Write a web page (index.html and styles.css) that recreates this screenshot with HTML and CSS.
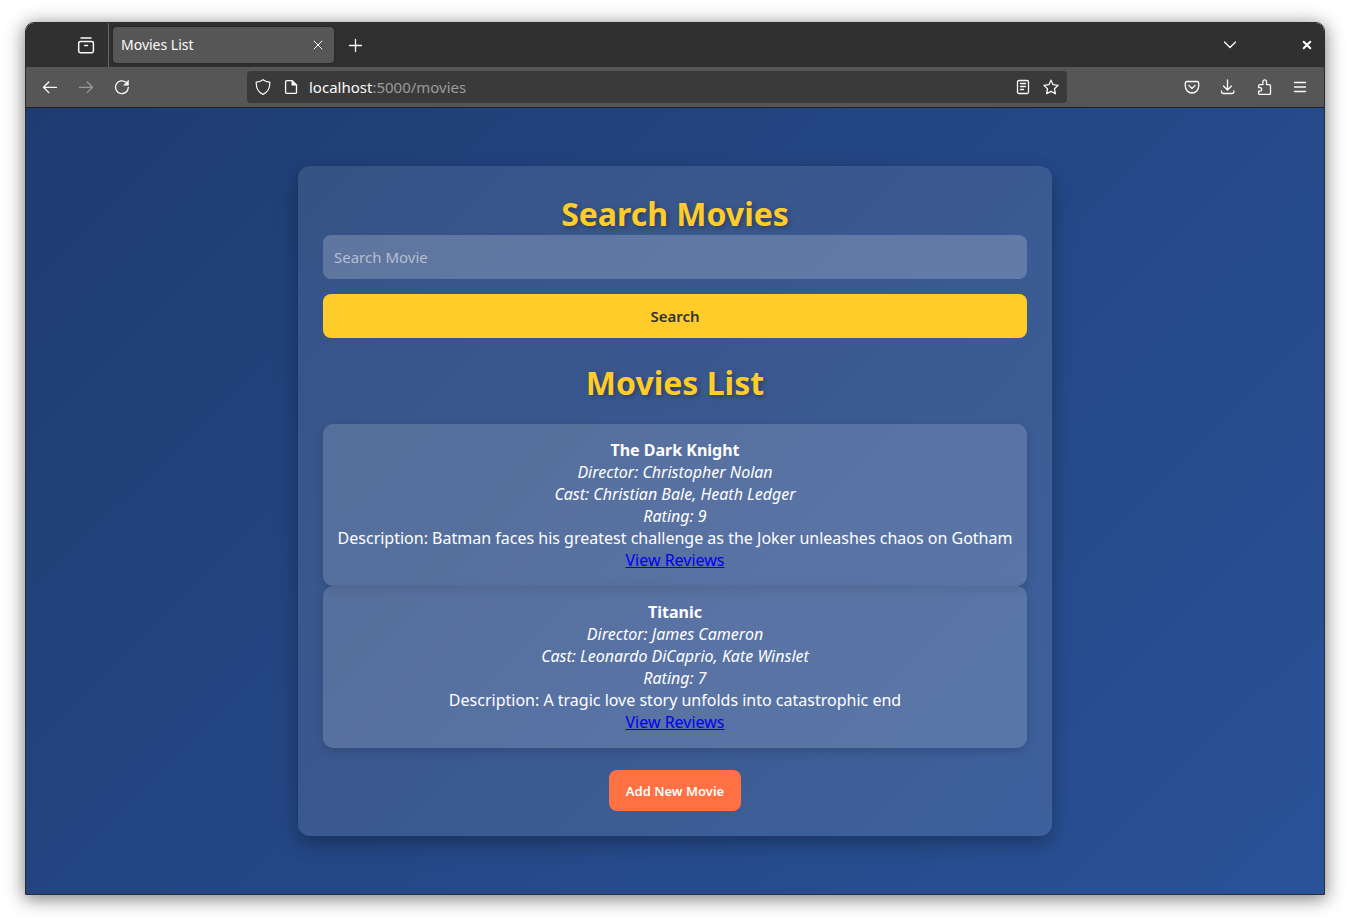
FILE: index.html
```html
<!DOCTYPE html>
<html lang="en">
<head>
<meta charset="utf-8">
<meta name="viewport" content="width=device-width, initial-scale=1">
<title>Movies List</title>
<link rel="stylesheet" href="styles.css">
</head>
<body>
<div class="window">
  <header class="tabbar">
    <button class="tool recent" aria-label="Recent browsing">
      <svg class="icon-lg" viewBox="0 0 20 20"><path d="M5 3h10M2.700 8c0-1 .6-1.600 1.600-1.600h11.500c1 0 1.600.6 1.600 1.600v8.100c0 1-.6 1.600-1.600 1.600H4.300c-1 0-1.600-.6-1.600-1.600zM8.700 10.500h2.800"/></svg>
    </button>
    <div class="tab">
      <span class="tab-title">Movies List</span>
      <button class="tab-close" aria-label="Close tab"><svg class="icon" viewBox="0 0 16 16"><path class="thin" d="M4 4l8 8M12 4l-8 8"/></svg></button>
    </div>
    <button class="tool new-tab" aria-label="New tab"><svg class="icon" viewBox="0 0 16 16"><path d="M8.500 2.500v12M2.500 8.500h12"/></svg></button>
    <button class="tool all-tabs" aria-label="List all tabs"><svg class="icon" viewBox="0 0 16 16"><path d="M2.500 5L8 10.500 13.500 5"/></svg></button>
    <button class="tool close-window" aria-label="Close window"><svg class="icon" viewBox="0 0 16 16"><path class="heavy" d="M4.700 4.700l6.600 6.600M11.300 4.700l-6.600 6.600"/></svg></button>
  </header>
  <nav class="toolbar">
    <div class="tools">
      <button class="tool" aria-label="Back"><svg class="icon" viewBox="0 0 16 16"><path d="M14.500 8.300H1.800M6.800 3L1.500 8.300l5.300 5.300"/></svg></button>
      <button class="tool" aria-label="Forward" disabled><svg class="icon" viewBox="0 0 16 16"><path d="M1.500 8.300h12.700M9.200 3l5.300 5.300-5.300 5.300"/></svg></button>
      <button class="tool" aria-label="Reload"><svg class="icon" viewBox="0 0 16 16"><path d="M14.300 8.500A6.400 6.400 0 1 1 12 3.300"/><path class="solid" d="M14.500 1.300v5H9.800z"/></svg></button>
    </div>
    <div class="address">
      <svg class="icon" viewBox="0 0 16 16"><path class="mid" d="M8 .7c2 1.500 4.300 2.300 6.800 2.500.2 5.600-1.600 9.700-6.800 12.200C2.800 12.900 1 8.800 1.200 3.200 3.700 3 6 2.200 8 .7z"/></svg>
      <svg class="icon" viewBox="0 0 16 16"><path d="M3.800 1.600h5.400l4.300 4.300v7.300c0 .8-.4 1.200-1.200 1.200H3.800c-.8 0-1.200-.4-1.200-1.200V2.800c0-.8.4-1.200 1.200-1.200z"/><path class="solid" d="M8.800 1.600v4.700h4.700z"/></svg>
      <a class="url" href="/movies"><span class="host">localhost</span>:5000/movies</a>
      <svg class="icon" viewBox="0 0 16 16"><rect x="2.500" y="1.500" width="11" height="13" rx="1.500"/><path d="M5.500 4.500h5M5.500 7.500h5M5.500 10.500h3"/></svg>
      <svg class="icon star" viewBox="0 0 16 16"><path d="M8 1.200l2.100 4.500 5 .7-3.600 3.400.9 5L8 12.400l-4.400 2.400.9-5L.9 6.400l5-.7z"/></svg>
    </div>
    <div class="tools">
      <button class="tool" aria-label="Save to Pocket"><svg class="icon" viewBox="0 0 16 16"><path d="M3 2.500h10c1 0 1.700.7 1.700 1.700v2.900C14.700 11 11.700 14 8 14S1.300 11 1.300 7.100V4.200c0-1 .7-1.700 1.700-1.700zM4.800 6.400L8 9.500l3.200-3.100"/></svg></button>
      <button class="tool" aria-label="Downloads"><svg class="icon" viewBox="0 0 16 16"><path d="M7.500 1v10M3.500 7l4 4 4-4M1.500 12v.8c0 1 .7 1.700 1.700 1.700h9c1 0 1.700-.7 1.700-1.700V12"/></svg></button>
      <button class="tool" aria-label="Extensions"><svg class="icon" viewBox="0 0 16 16"><path d="M2.600 8.600V6.900c0-.8.500-1.300 1.300-1.300h3V2.800c0-2.500 3.600-2.500 3.600 0v2.800h2.700c.8 0 1.300.5 1.300 1.300v7.300c0 .8-.5 1.300-1.300 1.300H3.900c-.8 0-1.300-.5-1.300-1.300v-2h1.300c2.500 0 2.500-3.600 0-3.600z"/></svg></button>
      <button class="tool" aria-label="Open menu"><svg class="icon" viewBox="0 0 16 16"><path d="M2.500 3.500h11M2.500 8h11M2.500 12.500h11"/></svg></button>
    </div>
  </nav>
  <main class="page">
    <div class="card">
      <form class="search">
        <h1 class="heading"><label for="query">Search Movies</label></h1>
        <input class="query" id="query" type="text" placeholder="Search Movie">
        <button class="submit" type="submit">Search</button>
      </form>
      <h1 class="heading list-heading">Movies List</h1>
      <ul class="movies">
        <li class="movie">
          <strong>The Dark Knight</strong>
          <em>Director: Christopher Nolan</em>
          <em>Cast: Christian Bale, Heath Ledger</em>
          <em>Rating: 9</em>
          <span>Description: Batman faces his greatest challenge as the Joker unleashes chaos on Gotham</span>
          <a class="reviews" href="#dark-knight">View Reviews</a>
        </li>
        <li class="movie">
          <strong>Titanic</strong>
          <em>Director: James Cameron</em>
          <em>Cast: Leonardo DiCaprio, Kate Winslet</em>
          <em>Rating: 7</em>
          <span>Description: A tragic love story unfolds into catastrophic end</span>
          <a class="reviews" href="#titanic">View Reviews</a>
        </li>
      </ul>
      <button class="add" type="button">Add New Movie</button>
    </div>
  </main>
</div>
</body>
</html>
```
FILE: styles.css
```css
* { box-sizing: border-box; }
body {
  margin: 0;
  min-height: 100vh;
  padding: 22px 25px 28px;
  display: flex;
  background: #fff;
  font: 16px/22px "Noto Sans", sans-serif;
}
button, input { font-family: "Noto Sans", sans-serif; border: 0; margin: 0; }
.window {
  flex: 1;
  min-width: 0;
  display: flex;
  flex-direction: column;
  border: 1px solid #2d2d2d;
  border-radius: 9px 9px 0 0;
  overflow: hidden;
  box-shadow: 0 3px 18px 1px rgba(0, 0, 0, .5);
}

/* Browser frame */
.tabbar {
  height: 44px;
  display: flex;
  align-items: center;
  background: #303030;
  color: #fbfbfb;
}
.tool {
  width: 36px;
  height: 36px;
  padding: 0;
  display: grid;
  place-items: center;
  background: none;
  color: #fbfbfb;
}
.tool:disabled { color: #999; }
.icon, .icon-lg {
  display: block;
  flex: none;
  width: 16px;
  height: 16px;
  fill: none;
  stroke: currentColor;
  stroke-width: 1.3;
  stroke-linecap: round;
  stroke-linejoin: round;
}
.icon-lg { width: 20px; height: 20px; stroke-width: 1.5; }
.thin { stroke-width: 1; }
.mid { stroke-width: 1.2; }
.heavy { stroke-width: 2; }
.solid { fill: currentColor; stroke-width: .5; }
.recent {
  width: 83px;
  height: 44px;
  padding-left: 38px;
  border-right: 1px solid #666;
}
.tab {
  width: 221px;
  height: 36px;
  margin-left: 4px;
  padding: 0 8px;
  display: flex;
  align-items: center;
  justify-content: space-between;
  background: #565656;
  border-radius: 4px;
  box-shadow: 0 0 3px rgba(0, 0, 0, .4);
}
.tab-title { font-size: 14px; }
.tab-close { padding: 0; background: none; color: #fbfbfb; }
.new-tab { margin-left: 3px; }
.all-tabs { margin-left: auto; }
.close-window { width: 34px; margin-left: 42px; }
.toolbar {
  height: 41px;
  padding: 0 6px;
  display: flex;
  align-items: center;
  background: #565656;
  border-bottom: 1px solid #202020;
}
.tools { display: flex; }
.address {
  flex: 1;
  max-width: 820px;
  height: 32px;
  margin: 0 auto;
  padding: 0 8px;
  display: flex;
  align-items: center;
  gap: 12px;
  background: #3a3a3a;
  border-radius: 4px;
  color: #fbfbfb;
}
.url {
  flex: 1;
  margin-left: -2px;
  font-size: 15px;
  color: #9b9b9b;
  text-decoration: none;
}
.host { color: #fbfbfb; }

/* Movies page */
.page {
  flex: 1;
  padding: 24px;
  display: flex;
  align-items: center;
  justify-content: center;
  background: linear-gradient(135deg, #1e3c72, #2a5298);
}
.card {
  width: 100%;
  max-width: 754px;
  padding: 25px;
  display: flex;
  flex-direction: column;
  align-items: center;
  background: rgba(255, 255, 255, .1);
  border-radius: 12px;
  box-shadow: 0 8px 20px rgba(0, 0, 0, .3);
  color: #fff;
  text-align: center;
}
.search { width: 100%; display: flex; flex-direction: column; }
.heading {
  margin: 0;
  padding-top: 2px;
  font-size: 32px;
  line-height: 42px;
  color: #ffcc29;
  text-shadow: 2px 2px 5px rgba(0, 0, 0, .3);
}
.list-heading { margin: 22px 0 20px; }
.query, .submit {
  width: 100%;
  height: 44px;
  border-radius: 8px;
  font-size: 15px;
}
.query {
  margin-bottom: 15px;
  padding: 0 11px;
  background: rgba(255, 255, 255, .2);
  color: #fff;
}
.query::placeholder { color: #b4bfd3; opacity: 1; }
.submit { background: #ffcc29; color: #333; font-weight: 600; }
.movies {
  width: 100%;
  margin: 0 0 22px;
  padding: 0;
  list-style: none;
}
.movie {
  display: flex;
  flex-direction: column;
  align-items: center;
  padding: 15px 10px;
  background: rgba(255, 255, 255, .15);
  border-radius: 10px;
  box-shadow: 0 4px 10px rgba(0, 0, 0, .15);
}
.reviews { color: #00e; text-decoration: underline; }
.add {
  height: 41px;
  padding: 0 17px;
  background: #ff7043;
  border-radius: 8px;
  color: #fff;
  font-size: 13px;
  font-weight: 600;
}
```
